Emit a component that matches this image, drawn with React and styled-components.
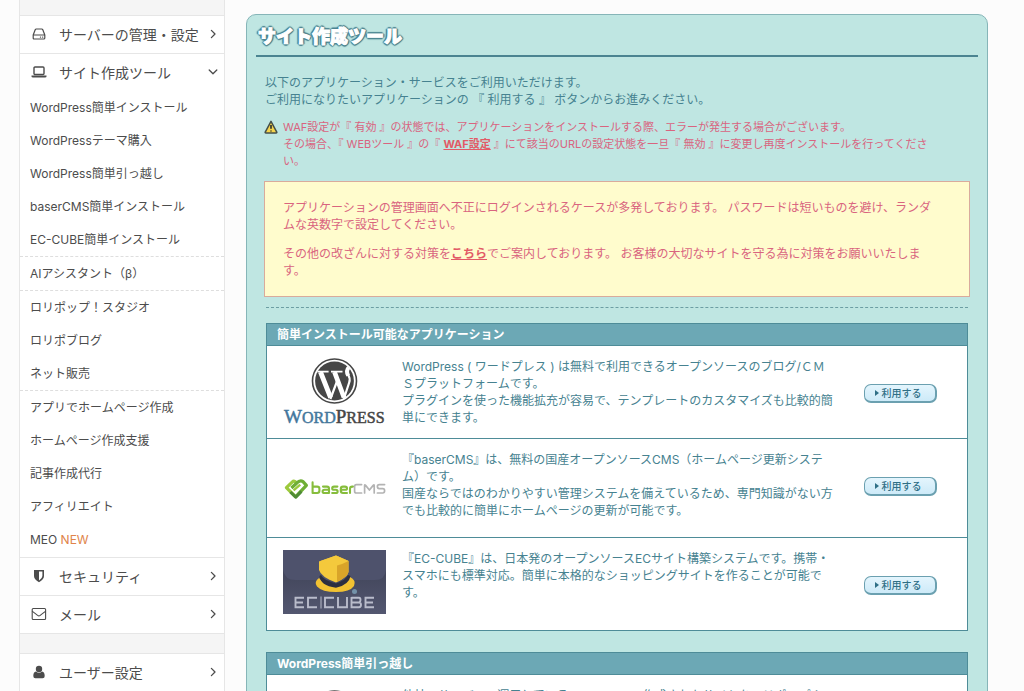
import React from "react";
import styled, { createGlobalStyle, css } from "styled-components";

const GlobalStyle = createGlobalStyle`
  *, *::before, *::after { box-sizing: border-box; }
  body {
    margin: 0;
    background: #fcfcfc;
    color: #4c4c4c;
    font-family: Inter, "Noto Sans CJK JP", sans-serif;
    font-size: 12px;
    line-height: 17px;
  }
  h1, h2, p, ul { margin: 0; padding: 0; }
  ul { list-style: none; }
`;

const Page = styled.div`
  display: flex;
  align-items: flex-start;
  height: 100vh;
  overflow: hidden;
  padding: 0 36px 0 19px;
`;

/* ---------- Sidebar ---------- */

const Sidebar = styled.nav`
  flex: 0 0 206px;
  min-width: 0;
  min-height: 100vh;
  border: 1px solid #e6e6e6;
  border-width: 0 1px;
  background: #fff;
`;

const Strip = styled.div`
  height: ${(p) => (p.$tall ? 20 : 15)}px;
  background: #f5f5f5;
  border-top: ${(p) => (p.$tall ? "1px solid #e6e6e6" : "0")};
`;

const CategoryButton = styled.button`
  display: grid;
  grid-template-columns: 20px minmax(0, 1fr) 12px;
  column-gap: 10px;
  align-items: center;
  width: 100%;
  height: 38px;
  padding: 0 5px 1px 9px;
  border: 0;
  border-top: 1px solid #e6e6e6;
  background: transparent;
  color: #4c4c4c;
  font: inherit;
  font-size: 14px;
  text-align: left;
  white-space: nowrap;
  cursor: pointer;

  svg { display: block; margin: 0 auto; }
`;

const Submenu = styled.ul`
  padding-bottom: 1px;
`;

const SubItem = styled.li`
  border-top: ${(p) => (p.$divided ? "1px dashed #dedede" : "0")};
`;

const SubLink = styled.a`
  display: block;
  padding: 8px 10px;
  color: #4c4c4c;
  text-decoration: none;
`;

const NewMark = styled.span`
  color: #e0844a;
`;

/* ---------- Main panel ---------- */

const Main = styled.main`
  flex: 1;
  min-width: 0;
  margin: 14px 0 0 21px;
  padding: 0 9px 40px;
  border: 1px solid #86b5b8;
  border-radius: 10px;
  background: #bfe6e2;
  color: #468290;
`;

const Title = styled.h1`
  padding: 7px 2px 6px;
  border-bottom: 2px solid #4b8491;
  color: #fff;
  font-family: "Noto Sans CJK JP", sans-serif;
  font-size: 18px;
  font-weight: 900;
  line-height: 27px;
  -webkit-text-stroke: 1px #fff;
  text-shadow:
    -2px 0 1px #4b8491, 2px 0 1px #4b8491, 0 -2px 1px #4b8491, 0 2px 1px #4b8491,
    -1px -1px 1px #4b8491, 1px -1px 1px #4b8491, -1px 1px 1px #4b8491, 1px 1px 1px #4b8491;
`;

const Content = styled.div`
  padding: 17px 8px 0;
`;

const Intro = styled.p`
  padding-left: 1px;
`;

const Caution = styled.div`
  display: flex;
  gap: 5px;
  margin-top: 11px;
  padding-right: 32px;
  color: #d9647f;
  font-size: 11px;

  svg { flex: 0 0 14px; margin-top: 1px; }
`;

const AlertLink = styled.a`
  color: #e25a66;
  font-weight: 700;
`;

const Notice = styled.section`
  margin-top: 11px;
  padding: 17px 30px 17px 18px;
  border: 1px solid #d9ab9c;
  background: #fffccd;
  color: #d9647f;

  p + p { margin-top: 12px; }
`;

const Divider = styled.hr`
  margin: 10px 2px 15px;
  border: 0;
  border-top: 1px dashed #6c9ea3;
`;

const AppPanel = styled.section`
  margin: 0 2px 21px;
  border: 1px solid #4e8c98;
  background: #fff;
`;

const PanelTitle = styled.h2`
  padding: 2px 10px;
  background: #6ca8b5;
  color: #fff;
  font-size: 12px;
  font-weight: 700;
  line-height: 17px;
`;

const AppRow = styled.li`
  display: flex;
  align-items: flex-start;
  padding: 12px 30px 12px 16px;
  border-top: 1px solid #4e8c98;
`;

const Logo = styled.div`
  display: flex;
  flex: 0 0 103px;
  align-items: ${(p) => (p.$top ? "flex-start" : "center")};
  height: ${(p) => (p.$tall ? 74 : 68)}px;
  margin-right: 16px;
`;

const Description = styled.p`
  flex: 1;
  min-width: 0;
  margin-right: 30px;
`;

const UseButton = styled.button`
  display: flex;
  flex: 0 0 73px;
  align-items: center;
  justify-content: center;
  gap: 3px;
  height: 19px;
  margin-top: 26px;
  padding: 0 4px 1px 0;
  border: 1px solid #6ba0b0;
  border-right-width: 2px;
  border-bottom-width: 2px;
  border-radius: 7px;
  background: linear-gradient(#e4f5fd, #cdeaf8);
  color: #2f6f86;
  font: inherit;
  font-size: 10px;
  font-weight: 500;
  line-height: 14px;
  cursor: pointer;
`;

/* ---------- Icons ---------- */

const strokes = css`
  fill: none;
  stroke: #4c4c4c;
  stroke-linecap: round;
  stroke-linejoin: round;
`;
const LineIcon = styled.svg`${strokes}`;

const ServerIcon = () => (
  <LineIcon width="14" height="14" viewBox="0 0 14 14" strokeWidth="1.2" aria-hidden="true">
    <path d="M1.2 8 3.2 2.8Q3.5 2 4.3 2H9.7Q10.5 2 10.8 2.8L12.8 8V11Q12.8 12 11.8 12H2.2Q1.2 12 1.2 11ZM1.2 8H12.8M8.4 10.1H8.6M10.6 10.1H10.8" />
  </LineIcon>
);
const LaptopIcon = () => (
  <svg width="16" height="14" viewBox="0 0 16 14" aria-hidden="true">
    <rect x="3" y="2" width="10" height="7.5" rx="1" fill="none" stroke="#4c4c4c" strokeWidth="1.4" />
    <path d="M.5 10.6H15.5V11.6Q15.5 12.6 14 12.6H2Q.5 12.6 .5 11.6Z" fill="#4c4c4c" />
  </svg>
);
const ShieldIcon = () => (
  <svg width="12" height="14" viewBox="0 0 12 14" aria-hidden="true">
    <path fillRule="evenodd" fill="#4c4c4c" d="M1 1H11V7Q11 10.5 6 13.2Q1 10.5 1 7ZM6 2.6V11.4Q9.4 9.2 9.4 7V2.6Z" />
  </svg>
);
const MailIcon = () => (
  <LineIcon width="16" height="14" viewBox="0 0 16 14" strokeWidth="1.1" aria-hidden="true">
    <rect x="1.2" y="1.5" width="13.4" height="11" rx="1" />
    <path d="M1.4 4.4Q4.5 6.7 6.6 8.4Q7.9 9.4 9.2 8.4Q11.3 6.7 14.4 4.4" />
  </LineIcon>
);
const UserIcon = () => (
  <svg width="12" height="14" viewBox="0 0 12 14" fill="#4c4c4c" aria-hidden="true">
    <circle cx="6" cy="4" r="3.2" />
    <path d="M3 6.4Q.3 6.8 .3 11Q.3 13.2 2.4 13.2H9.6Q11.7 13.2 11.7 11Q11.7 6.8 9 6.4Q6 9 3 6.4Z" />
  </svg>
);
const Chevron = ({ open }) => (
  <LineIcon width="12" height="12" viewBox="0 0 12 12" strokeWidth="1.3" aria-hidden="true">
    <path d={open ? "M2.2 4 6 7.8 9.8 4" : "M4.4 2.4 8 6 4.4 9.6"} />
  </LineIcon>
);
const WarningIcon = () => (
  <svg width="14" height="14" viewBox="0 0 14 14" aria-hidden="true">
    <path d="M7 1.3 12.9 12.3Q12.9 13 12.2 13H1.8Q1.1 13 1.1 12.3Z" fill="#f5d44c" stroke="#45504a" strokeWidth="1.5" strokeLinejoin="round" />
    <path d="M7 5V8.8M7 10.4V11.6" stroke="#33382f" strokeWidth="1.7" />
  </svg>
);

/* ---------- Logos ---------- */

const WordPressLogo = () => (
  <svg width="103" height="68" viewBox="0 0 103 68" role="img" aria-label="WordPress">
    <circle cx="51.5" cy="23" r="22" fill="#fff" stroke="#464646" strokeWidth="1.6" />
    <circle cx="51.5" cy="23" r="19.4" fill="#464646" />
    <g fill="none" stroke="#fff">
      <path d="M34.5 13.6H45.6M48 13.6H59.5" strokeWidth="1.8" />
      <path d="M37.5 14 47.6 39.5M51.5 14 61 39.5" strokeWidth="4.8" />
      <path d="M47.4 41 54.5 22M60.8 41 66.2 24.5Q67.6 20.5 65 16.5Q63 12.8 65.2 9.6" strokeWidth="2.2" />
      <path d="M65.2 17.6Q62.6 12.8 65.8 9.4" strokeWidth="4" />
    </g>
    <text x="1" y="65" fontFamily="'Liberation Serif', serif" fontSize="16" fill="#464646" stroke="#464646" strokeWidth="0.5">
      <tspan fontSize="19" fill="#44779c" stroke="#44779c">W</tspan>
      <tspan fill="#44779c" stroke="#44779c">ORD</tspan>
      <tspan fontSize="19">P</tspan>
      <tspan>RESS</tspan>
    </text>
  </svg>
);
const BaserLogo = () => (
  <svg width="103" height="26" viewBox="0 0 103 26" role="img" aria-label="baserCMS">
    <g fill="none" strokeLinejoin="round">
      <path d="M12.8 22 3.4 12.6 9.4 6.8Q10.6 5.6 12 6.6L14 8.2" stroke="#9cc93c" strokeWidth="3.2" />
      <path d="M8.4 13 13.6 8.2Q17 4.6 20 6.6L23.4 10.4 12.8 21.6" stroke="#6fae35" strokeWidth="3.2" />
      <path d="M10.6 15.4 17.2 9.6" stroke="#9cc93c" strokeWidth="2.4" />
      <path d="M7.4 17 12.8 22.2 18.4 16.4" stroke="#4f8b35" strokeWidth="3" />
    </g>
    <g fill="none" strokeWidth="2.1" strokeLinecap="round" strokeLinejoin="round">
      <path stroke="#86bd3c" d="M29.6 7.4V18H34.2Q36.4 18 36.4 15.8V13.8Q36.4 11.6 34.2 11.6H30M40 11.6H44Q46 11.6 46 13.6V18H41.6Q39.6 18 39.6 16.4Q39.6 14.8 41.6 14.8H45.6M54.4 11.6H51Q49.2 11.6 49.2 13.2Q49.2 14.8 51 14.8H52.8Q54.6 14.8 54.6 16.4Q54.6 18 52.8 18H49.2M64 18H60Q57.8 18 57.8 15.8V13.8Q57.8 11.6 60 11.6H62Q64 11.6 64 13.4Q64 14.8 62.4 14.8H58.4M67 18V13.8Q67 11.6 69.2 11.6H70" />
      <path stroke="#b3b3b3" strokeWidth="1.7" d="M78.6 9.6H73.4Q71.6 9.6 71.6 11.4V16.2Q71.6 18 73.4 18H78.6M81.6 18V10.6Q81.6 9.4 82.6 10.4L86.4 15 90.2 10.4Q91.2 9.4 91.2 10.6V18M101.6 9.6H96.2Q94.4 9.6 94.4 11.6Q94.4 13.6 96.2 13.6H99.8Q101.6 13.6 101.6 15.8Q101.6 18 99.8 18H94.4" />
    </g>
  </svg>
);
const EcCubeLogo = () => (
  <svg width="103" height="64" viewBox="0 0 103 64" role="img" aria-label="EC-CUBE">
    <defs>
      <linearGradient id="ecBase" x1="0" y1="0" x2="0" y2="1">
        <stop offset="0" stopColor="#3a3d51" />
        <stop offset="1" stopColor="#535770" />
      </linearGradient>
    </defs>
    <rect width="103" height="64" fill="url(#ecBase)" />
    <path d="M0 0H103V20Q102 30 92 30H12Q2 30 0 20Z" fill="#4e526c" />
    <path d="M36 28Q30.5 32 34 36.5Q39 42 53 42Q67 42 71 36Q73.4 30 67 27L64 31Q53 38 41 33Z" fill="#f2c232" />
    <path d="M36.5 26Q37 35.5 53 37.8Q66 35 67.5 26L65 25Q63 30 53 33.5Q40 30 38 25Z" fill="#2c2f40" />
    <path d="M53 5.5 65.5 11V22Q64.5 27 53 32.5Q38 27 36 20V11.5Z" fill="#f4c93c" />
    <path d="M54 6 65.5 11V22Q64.5 27 54 32Z" fill="#d9a429" />
    <path d="M53 5.5 65.5 11Q60 14 54 15.5L36 11.5Z" fill="#f4c93c" />
    <circle cx="71.5" cy="41.5" r="2.5" fill="#7391a8" />
    <g fill="none" stroke="#b9bccb" strokeWidth="1.9">
      <path d="M21 47.8H12.5V57.2H21M12.5 52.5H20M34 47.8H25V57.2H34M51 47.8H42V57.2H51M55 47V57.2H64V47M68.5 47.8H76Q77.5 47.8 77.5 50T76 52.5H68.5M68.5 47V57.2H76Q78 57.2 78 54.8T76 52.5M91 47.8H82.5V57.2H91M82.5 52.5H90" />
      <path d="M38 46.5V58.5" strokeWidth="1" />
    </g>
  </svg>
);

/* ---------- Data ---------- */

const siteTools = [
  { label: "WordPress簡単インストール" },
  { label: "WordPressテーマ購入" },
  { label: "WordPress簡単引っ越し" },
  { label: "baserCMS簡単インストール" },
  { label: "EC-CUBE簡単インストール" },
  { label: "AIアシスタント（β）", divided: true },
  { label: "ロリポップ！スタジオ", divided: true },
  { label: "ロリポブログ" },
  { label: "ネット販売" },
  { label: "アプリでホームページ作成", divided: true },
  { label: "ホームページ作成支援" },
  { label: "記事作成代行" },
  { label: "アフィリエイト" },
  { label: "MEO", isNew: true },
];

const Category = ({ icon, label, open }) => (
  <CategoryButton type="button" aria-expanded={!!open}>
    {icon}
    <span>{label}</span>
    <Chevron open={open} />
  </CategoryButton>
);

const AppEntry = ({ logo, tall, top, children }) => (
  <AppRow>
    <Logo $tall={tall} $top={top}>{logo}</Logo>
    <Description>{children}</Description>
    <UseButton type="button">
      <svg width="4" height="6" viewBox="0 0 4 6" aria-hidden="true">
        <path d="M0 0 4 3 0 6Z" fill="#2f6f86" />
      </svg>
      利用する
    </UseButton>
  </AppRow>
);

export default function App() {
  return (
    <>
      <GlobalStyle />
      <Page lang="ja">
        <Sidebar>
          <Strip />
          <Category icon={<ServerIcon />} label="サーバーの管理・設定" />
          <Category icon={<LaptopIcon />} label="サイト作成ツール" open />
          <Submenu>
            {siteTools.map((item) => (
              <SubItem key={item.label} $divided={item.divided}>
                <SubLink href="#">
                  {item.label}
                  {item.isNew && <NewMark> NEW</NewMark>}
                </SubLink>
              </SubItem>
            ))}
          </Submenu>
          <Category icon={<ShieldIcon />} label="セキュリティ" />
          <Category icon={<MailIcon />} label="メール" />
          <Strip $tall />
          <Category icon={<UserIcon />} label="ユーザー設定" />
        </Sidebar>

        <Main>
          <Title>サイト作成ツール</Title>
          <Content>
            <Intro>
              以下のアプリケーション・サービスをご利用いただけます。
              <br />
              ご利用になりたいアプリケーションの 『 利用する 』 ボタンからお進みください。
            </Intro>
            <Caution>
              <WarningIcon />
              <p>
                WAF設定が『 有効 』の状態では、アプリケーションをインストールする際、エラーが発生する場合がございます。
                <br />
                その場合、『 WEBツール 』の『 <AlertLink href="#">WAF設定</AlertLink>{" "}
                』にて該当のURLの設定状態を一旦『 無効 』に変更し再度インストールを行ってください。
              </p>
            </Caution>
            <Notice>
              <p>
                アプリケーションの管理画面へ不正にログインされるケースが多発しております。
                パスワードは短いものを避け、ランダムな英数字で設定してください。
              </p>
              <p>
                その他の改ざんに対する対策を<AlertLink href="#">こちら</AlertLink>でご案内しております。
                お客様の大切なサイトを守る為に対策をお願いいたします。
              </p>
            </Notice>
            <Divider />
            <AppPanel>
              <PanelTitle>簡単インストール可能なアプリケーション</PanelTitle>
              <ul>
                <AppEntry logo={<WordPressLogo />}>
                  WordPress ( ワードプレス ) は無料で利用できるオープンソースのブログ/ＣＭＳプラットフォームです。
                  <br />
                  プラグインを使った機能拡充が容易で、テンプレートのカスタマイズも比較的簡単にできます。
                </AppEntry>
                <AppEntry logo={<BaserLogo />} tall>
                  『baserCMS』は、無料の国産オープンソースCMS（ホームページ更新システム）です。
                  <br />
                  国産ならではのわかりやすい管理システムを備えているため、専門知識がない方でも比較的に簡単にホームページの更新が可能です。
                </AppEntry>
                <AppEntry logo={<EcCubeLogo />} top>
                  『EC-CUBE』は、日本発のオープンソースECサイト構築システムです。携帯・スマホにも標準対応。簡単に本格的なショッピングサイトを作ることが可能です。
                </AppEntry>
              </ul>
            </AppPanel>
            <AppPanel>
              <PanelTitle>WordPress簡単引っ越し</PanelTitle>
              <ul>
                <AppEntry logo={<WordPressLogo />} tall>
                  他社のサーバーで運用しているWordPressで作成されたサイトをロリポップ！に簡単に移行できます。
                </AppEntry>
              </ul>
            </AppPanel>
          </Content>
        </Main>
      </Page>
    </>
  );
}
